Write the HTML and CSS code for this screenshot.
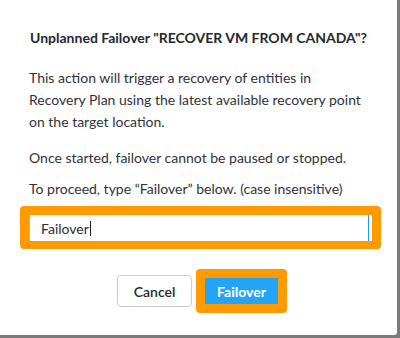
FILE: index.html
```html
<!DOCTYPE HTML>
<html lang="en">
  <head>
    <title>Unplanned Failover</title>
    <meta charset="utf-8" />
    <link rel="stylesheet" href="styles.css">
  </head>
  <body>
    <div class='modal'>
      <div class='title'>Unplanned Failover "RECOVER VM FROM CANADA"?</div>
      <p class='text first'>This action will trigger a recovery of entities in Recovery Plan using the latest available recovery point on the target location.</p>
      <p class='text second'>Once started, failover cannot be paused or stopped.</p>
      <p class='text third'>To proceed, type “Failover” below. (case insensitive)</p>
      <div class='highlight field'>
        <div class='input'>Failover<span class='caret'></span></div>
      </div>
      <div class='buttons'>
        <button class='button cancel'>Cancel</button>
        <div class='highlight action'>
          <button class='button primary'>Failover</button>
        </div>
      </div>
    </div>
  </body>
</html>
```

FILE: styles.css
```css
body {
  margin: 0;
  width: 400px;
  height: 338px;
  overflow: hidden;
  background-color: #7b7b7b;
  font-family: Lato, "Liberation Sans", sans-serif;
  color: #2f3338;
}

.modal {
  width: 397px;
  height: 335px;
  box-sizing: border-box;
  padding: 28px 0 0 29px;
  background-color: #ffffff;
  border-bottom-right-radius: 3px;
}

.title {
  margin-left: -29px;
  font-size: 14px;
  font-weight: bold;
  line-height: 20px;
  text-align: center;
  color: #24282d;
}

.text {
  margin: 0;
  width: 340px;
  font-size: 14px;
  line-height: 22px;
}

.first { margin-top: 19px; }
.second { margin-top: 14px; }
.third { margin-top: 9px; }

.highlight {
  box-sizing: border-box;
  border: 9px solid #ff9a00;
  border-radius: 4px;
}

.field {
  width: 361px;
  margin: 6px 0 0 -9px;
  border-bottom-width: 8px;
  padding-right: 3px;
}

.input {
  display: flex;
  align-items: center;
  height: 26px;
  padding-left: 11px;
  border-left: 1px solid #7cc4f4;
  border-right: 1px solid #1e9cf0;
  font-size: 14px;
  color: #2a2e33;
}

.caret {
  width: 1px;
  height: 15px;
  margin-left: 1px;
  background-color: #1c1f22;
}

.buttons {
  display: flex;
  align-items: center;
  margin: 20px 0 0 88px;
}

.button {
  font-family: inherit;
  font-size: 14px;
  cursor: pointer;
}

.cancel {
  width: 75px;
  height: 32px;
  border: 1px solid #c9ced4;
  border-radius: 4px;
  background-color: #ffffff;
  color: #25292e;
  font-weight: 600;
}

.action {
  margin-left: 4px;
  width: 91px;
  height: 44px;
}

.primary {
  display: block;
  width: 73px;
  height: 26px;
  padding: 0;
  border: none;
  background-color: #22a5f7;
  color: #ffffff;
  font-weight: bold;
}
```
